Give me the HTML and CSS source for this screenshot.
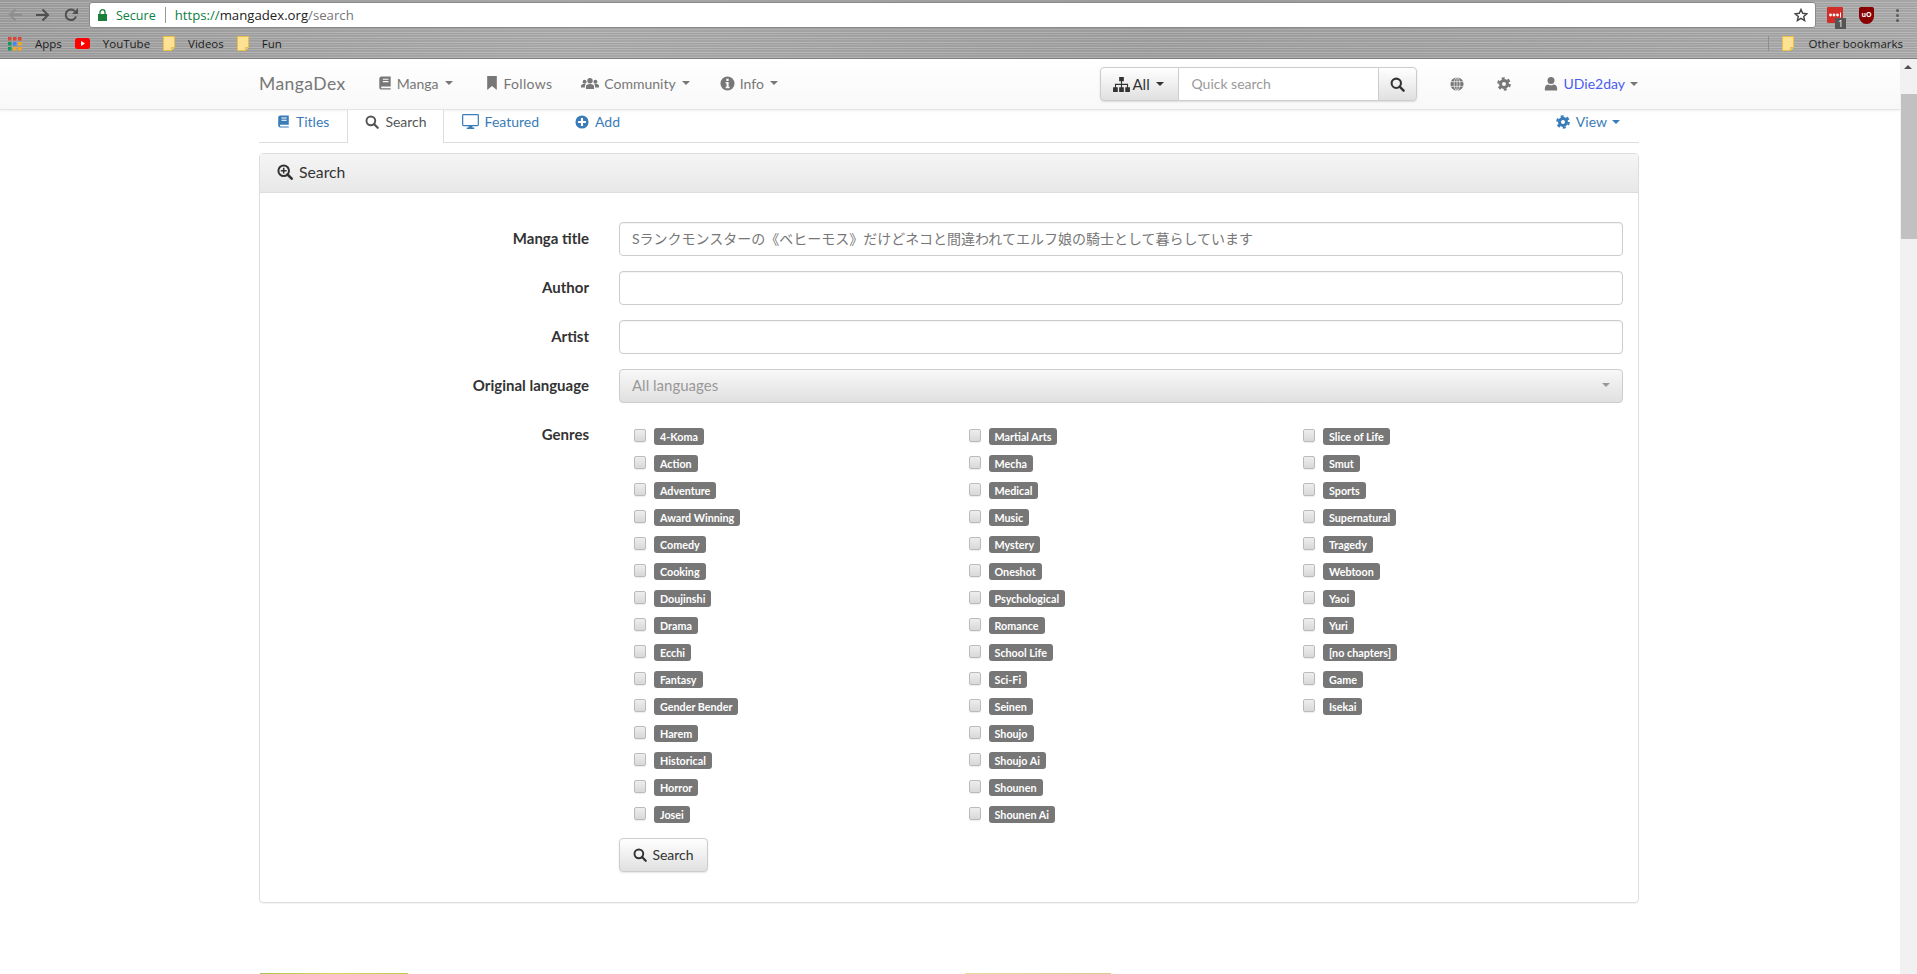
FILE: index.html
```html
<!DOCTYPE html>
<html>
<head>
  <title>Search - MangaDex</title>
  <link rel="stylesheet" href="styles.css">
</head>
<body>
  <svg class="sprite" width="0" height="0">
    <symbol id="i-book" viewBox="0 0 16 16"><path fill-rule="evenodd" d="M4 .5h10.500v11.500H4.500a1 1 0 0 0 0 2h10v1.500H4A2.500 2.500 0 0 1 1.500 13V3A2.500 2.500 0 0 1 4 .5zM5.500 3.200v1.200h6.500V3.200zM5.500 5.800V7h6.500V5.800z"/></symbol>
    <symbol id="i-bookmark" viewBox="0 0 16 16"><path d="M2.500 0h11v16L8 11.500 2.500 16z"/></symbol>
    <symbol id="i-users" viewBox="0 0 20 16"><circle cx="10" cy="5" r="3"/><circle cx="4" cy="6" r="2.200"/><circle cx="16" cy="6" r="2.200"/><path d="M5.500 14v-2.500C5.500 9.500 7 8.500 10 8.500s4.500 1 4.500 3V14zM0 12.500v-2C0 9 1.500 8.500 4 8.500c.5 0 1 0 1.300.2-.8.700-1 1.700-1 3.800zM20 12.500v-2C20 9 18.500 8.500 16 8.500c-.5 0-1 0-1.300.2.800.700 1 1.700 1 3.800z"/></symbol>
    <symbol id="i-info" viewBox="0 0 16 16"><path fill-rule="evenodd" d="M8 .5a7.500 7.500 0 1 0 0 15 7.500 7.500 0 0 0 0-15zM6.800 3h2.400v2.300H6.800zM6 6.500h3.200v5h1v1.500H6v-1.500h1v-3.500H6z"/></symbol>
    <symbol id="i-sitemap" viewBox="0 0 18 16"><path d="M6.500 0h5v4.500h-5zM0 11h5v5H0zM6.500 11h5v5h-5zM13 11h5v5h-5zM8.400 4.500h1.200v2.700H16v3.800h-1.200V8.400H9.600V11H8.400V8.400H3.200V11H2V7.200h6.400z"/></symbol>
    <symbol id="i-search" viewBox="0 0 16 16"><circle cx="6.700" cy="6.700" r="5" fill="none" stroke="currentColor" stroke-width="2.200"/><path d="M10.300 10.300l4.200 4.200" stroke="currentColor" stroke-width="2.600" stroke-linecap="round"/></symbol>
    <symbol id="i-search-plus" viewBox="0 0 16 16"><circle cx="6.700" cy="6.700" r="5.300" fill="none" stroke="currentColor" stroke-width="2"/><path d="M10.500 10.500l4.200 4.200" stroke="currentColor" stroke-width="2.600" stroke-linecap="round"/><path d="M6.700 3.800v5.800M3.800 6.700h5.800" stroke="currentColor" stroke-width="1.500"/></symbol>
    <symbol id="i-cog" viewBox="0 0 16 16"><circle cx="8" cy="8" r="4" fill="none" stroke="currentColor" stroke-width="3.400"/><circle cx="8" cy="8" r="6.500" fill="none" stroke="currentColor" stroke-width="2.600" stroke-dasharray="3.400 3.400"/></symbol>
    <symbol id="i-globe" viewBox="0 0 16 16"><circle cx="8" cy="8" r="7.500"/><g fill="none" stroke="#f4f4f4" stroke-width=".8"><ellipse cx="8" cy="8" rx="3.300" ry="7.500"/><path d="M1 5.300h14M1 10.700h14M8 .5v15"/></g></symbol>
    <symbol id="i-user" viewBox="0 0 16 16"><circle cx="8" cy="4.500" r="4"/><path d="M1 16v-2.500C1 10.500 3 9 5 9c1 .7 2 1 3 1s2-.3 3-1c2 0 4 1.500 4 4.500V16z"/></symbol>
    <symbol id="i-desktop" viewBox="0 0 18 16"><path fill-rule="evenodd" d="M1.500 0h15A1.500 1.500 0 0 1 18 1.500v10a1.500 1.500 0 0 1-1.500 1.500H11v1.500h2V16H5v-1.500h2V13H1.500A1.500 1.500 0 0 1 0 11.500v-10A1.500 1.500 0 0 1 1.500 0zM1.300 1.300v10.400h15.400V1.300z"/></symbol>
    <symbol id="i-plus" viewBox="0 0 16 16"><path fill-rule="evenodd" d="M8 .5a7.500 7.500 0 1 0 0 15 7.500 7.500 0 0 0 0-15zM6.800 3.500h2.400v3.300h3.300v2.400H9.200v3.300H6.800V9.200H3.500V6.800h3.300z"/></symbol>
    <symbol id="i-folder" viewBox="0 0 12 15"><path d="M.5.500h11v11l-3 3H.5z" fill="#fde293" stroke="#e8bf4a"/><path d="M8.500 14.500v-3h3" fill="#f0cf6a" stroke="#e8bf4a"/></symbol>
  </svg>

  <div class="chrome">
    <div class="toolbar">
      <div class="toolbar-nav">
        <svg class="nav-arrow faded" width="14" height="14" viewBox="0 0 14 14"><path d="M14 7H2M7.500 1.500L2 7l5.500 5.500" fill="none" stroke="currentColor" stroke-width="2"/></svg>
        <svg class="nav-arrow" width="14" height="14" viewBox="0 0 14 14"><path d="M0 7h12M6.500 1.500L12 7l-5.500 5.500" fill="none" stroke="currentColor" stroke-width="2"/></svg>
        <svg class="nav-arrow" width="14" height="14" viewBox="0 0 14 14"><path d="M12 8.500A5.300 5.300 0 1 1 10.700 3" fill="none" stroke="currentColor" stroke-width="2"/><path d="M14 0v6H8z" fill="currentColor"/></svg>
      </div>
      <div class="omnibox">
        <svg class="lock" width="9" height="12" viewBox="0 0 9 12"><path d="M2 5V3.200a2.500 2.500 0 0 1 5 0V5" fill="none" stroke="#188038" stroke-width="1.300"/><path d="M0 5h9v7H0z" fill="#188038"/></svg>
        <span class="secure">Secure</span>
        <span class="omni-sep"></span>
        <span class="url"><span class="url-scheme">https://</span><span class="url-host">mangadex.org</span>/search</span>
        <svg class="star" width="14" height="14" viewBox="0 0 24 24"><path d="M12 2.500l2.900 6.600 7.100.7-5.400 4.700 1.600 7-6.200-3.700-6.200 3.700 1.600-7L2 9.800l7.100-.7z" fill="none" stroke="#444" stroke-width="2.400"/></svg>
      </div>
      <div class="extensions">
        <div class="ext-lastpass">
          <svg width="16" height="16" viewBox="0 0 16 16"><circle cx="3.500" cy="8" r="1.400" fill="#fff"/><circle cx="7" cy="8" r="1.400" fill="#fff"/><circle cx="10.500" cy="8" r="1.400" fill="#fff"/><path d="M13.500 5.500v5" stroke="#fff"/></svg>
          <span class="ext-badge">1</span>
        </div>
        <div class="ext-ublock">uO</div>
        <div class="chrome-menu"><i></i><i></i><i></i></div>
      </div>
    </div>
    <div class="bookmarks">
      <div class="bm">
        <svg width="14" height="14" viewBox="0 0 14 14">
          <path fill="#db4437" d="M0 0h3.500v3.500H0z"/><path fill="#db4437" d="M5 0h3.500v3.500H5z"/><path fill="#db4437" d="M10 0h3.500v3.500H10z"/>
          <path fill="#0f9d58" d="M0 5h3.500v3.500H0z"/><path fill="#4285f4" d="M5 5h3.500v3.500H5z"/><path fill="#f4a81c" d="M10 5h3.500v3.500H10z"/>
          <path fill="#0f9d58" d="M0 10h3.500v3.500H0z"/><path fill="#f4a81c" d="M5 10h3.500v3.500H5z"/><path fill="#f4a81c" d="M10 10h3.500v3.500H10z"/>
        </svg>
        Apps
      </div>
      <div class="bm">
        <svg width="15" height="11" viewBox="0 0 15 11"><rect width="15" height="11" rx="2.500" fill="#f00"/><path d="M6 3l4 2.500L6 8z" fill="#fff"/></svg>
        YouTube
      </div>
      <div class="bm"><svg class="folder" width="12" height="15"><use href="#i-folder"/></svg>Videos</div>
      <div class="bm"><svg class="folder" width="12" height="15"><use href="#i-folder"/></svg>Fun</div>
      <div class="bm bm-other"><svg class="folder" width="12" height="15"><use href="#i-folder"/></svg>Other bookmarks</div>
    </div>
  </div>

  <div class="viewport">
    <div class="page">
      <nav class="navbar">
        <span class="brand">MangaDex</span>
        <a class="nav-item"><svg class="ico" width="14" height="16"><use href="#i-book"/></svg>Manga<span class="caret"></span></a>
        <a class="nav-item"><svg class="ico" width="14" height="16"><use href="#i-bookmark"/></svg>Follows</a>
        <a class="nav-item"><svg class="ico" width="18" height="15"><use href="#i-users"/></svg>Community<span class="caret"></span></a>
        <a class="nav-item"><svg class="ico" width="15" height="15"><use href="#i-info"/></svg>Info<span class="caret"></span></a>

        <div class="quick-search">
          <button class="qs-type"><svg class="ico" width="17" height="15"><use href="#i-sitemap"/></svg>All<span class="caret dark"></span></button>
          <input class="qs-input" type="text" placeholder="Quick search">
          <button class="qs-go"><svg width="15" height="15"><use href="#i-search"/></svg></button>
        </div>
        <a class="nav-icon"><svg width="14" height="14"><use href="#i-globe"/></svg></a>
        <a class="nav-icon"><svg width="14" height="14"><use href="#i-cog"/></svg></a>
        <a class="nav-user"><svg width="14" height="15"><use href="#i-user"/></svg><span class="user-name">UDie2day</span><span class="caret"></span></a>
      </nav>

      <main class="content">
        <ul class="tabs">
          <li class="tab"><svg width="13" height="15"><use href="#i-book"/></svg>Titles</li>
          <li class="tab active"><svg width="14" height="14"><use href="#i-search"/></svg>Search</li>
          <li class="tab"><svg width="17" height="15"><use href="#i-desktop"/></svg>Featured</li>
          <li class="tab"><svg width="14" height="14"><use href="#i-plus"/></svg>Add</li>
          <li class="tab tab-view"><svg width="14" height="14"><use href="#i-cog"/></svg>View<span class="caret"></span></li>
        </ul>

        <section class="card">
          <div class="card-header"><svg width="16" height="16"><use href="#i-search-plus"/></svg>Search</div>
          <form class="card-body">
            <div class="form-row">
              <label class="form-label">Manga title</label>
              <input class="form-input" type="text" value="Sランクモンスターの《ベヒーモス》だけどネコと間違われてエルフ娘の騎士として暮らしています">
            </div>
            <div class="form-row">
              <label class="form-label">Author</label>
              <input class="form-input" type="text">
            </div>
            <div class="form-row">
              <label class="form-label">Artist</label>
              <input class="form-input" type="text">
            </div>
            <div class="form-row">
              <label class="form-label">Original language</label>
              <div class="form-select">All languages<span class="caret"></span></div>
            </div>
            <div class="form-row genres-row">
              <label class="form-label">Genres</label>
              <div class="genres">
                <label class="genre"><input type="checkbox"><span class="badge">4-Koma</span></label>
                <label class="genre"><input type="checkbox"><span class="badge">Action</span></label>
                <label class="genre"><input type="checkbox"><span class="badge">Adventure</span></label>
                <label class="genre"><input type="checkbox"><span class="badge">Award Winning</span></label>
                <label class="genre"><input type="checkbox"><span class="badge">Comedy</span></label>
                <label class="genre"><input type="checkbox"><span class="badge">Cooking</span></label>
                <label class="genre"><input type="checkbox"><span class="badge">Doujinshi</span></label>
                <label class="genre"><input type="checkbox"><span class="badge">Drama</span></label>
                <label class="genre"><input type="checkbox"><span class="badge">Ecchi</span></label>
                <label class="genre"><input type="checkbox"><span class="badge">Fantasy</span></label>
                <label class="genre"><input type="checkbox"><span class="badge">Gender Bender</span></label>
                <label class="genre"><input type="checkbox"><span class="badge">Harem</span></label>
                <label class="genre"><input type="checkbox"><span class="badge">Historical</span></label>
                <label class="genre"><input type="checkbox"><span class="badge">Horror</span></label>
                <label class="genre"><input type="checkbox"><span class="badge">Josei</span></label>
                <label class="genre"><input type="checkbox"><span class="badge">Martial Arts</span></label>
                <label class="genre"><input type="checkbox"><span class="badge">Mecha</span></label>
                <label class="genre"><input type="checkbox"><span class="badge">Medical</span></label>
                <label class="genre"><input type="checkbox"><span class="badge">Music</span></label>
                <label class="genre"><input type="checkbox"><span class="badge">Mystery</span></label>
                <label class="genre"><input type="checkbox"><span class="badge">Oneshot</span></label>
                <label class="genre"><input type="checkbox"><span class="badge">Psychological</span></label>
                <label class="genre"><input type="checkbox"><span class="badge">Romance</span></label>
                <label class="genre"><input type="checkbox"><span class="badge">School Life</span></label>
                <label class="genre"><input type="checkbox"><span class="badge">Sci-Fi</span></label>
                <label class="genre"><input type="checkbox"><span class="badge">Seinen</span></label>
                <label class="genre"><input type="checkbox"><span class="badge">Shoujo</span></label>
                <label class="genre"><input type="checkbox"><span class="badge">Shoujo Ai</span></label>
                <label class="genre"><input type="checkbox"><span class="badge">Shounen</span></label>
                <label class="genre"><input type="checkbox"><span class="badge">Shounen Ai</span></label>
                <label class="genre"><input type="checkbox"><span class="badge">Slice of Life</span></label>
                <label class="genre"><input type="checkbox"><span class="badge">Smut</span></label>
                <label class="genre"><input type="checkbox"><span class="badge">Sports</span></label>
                <label class="genre"><input type="checkbox"><span class="badge">Supernatural</span></label>
                <label class="genre"><input type="checkbox"><span class="badge">Tragedy</span></label>
                <label class="genre"><input type="checkbox"><span class="badge">Webtoon</span></label>
                <label class="genre"><input type="checkbox"><span class="badge">Yaoi</span></label>
                <label class="genre"><input type="checkbox"><span class="badge">Yuri</span></label>
                <label class="genre"><input type="checkbox"><span class="badge">[no chapters]</span></label>
                <label class="genre"><input type="checkbox"><span class="badge">Game</span></label>
                <label class="genre"><input type="checkbox"><span class="badge">Isekai</span></label>
              </div>
            </div>
            <div class="form-row submit-row">
              <button class="search-button" type="button"><svg width="14" height="14"><use href="#i-search"/></svg>Search</button>
            </div>
          </form>
        </section>

        <div class="thumbs">
          <div class="thumb thumb-green"></div>
          <div class="thumb thumb-cream"></div>
        </div>
      </main>
    </div>

    <div class="scrollbar">
      <div class="scroll-up"></div>
      <div class="scroll-thumb"></div>
    </div>
  </div>
</body>
</html>
```

FILE: styles.css
```css
* {
  box-sizing: border-box;
}

html, body {
  margin: 0;
  height: 974px;
  overflow: hidden;
}

body {
  display: flex;
  flex-direction: column;
  background-color: #fff;
  color: #333;
  font-family: "Lato", "Noto Sans CJK JP", sans-serif;
  font-size: 14px;
}

.sprite {
  position: absolute;
}

svg {
  fill: currentColor;
  flex-shrink: 0;
}

/* browser chrome */
.chrome {
  height: 59px;
  flex-shrink: 0;
  border-bottom: 1px solid #7c7c7c;
  background-color: #aaa;
  background-image:
    repeating-linear-gradient(0deg, rgba(255,255,255,.14) 0 1px, rgba(0,0,0,.05) 1px 3px, rgba(255,255,255,.05) 3px 4px, rgba(0,0,0,.08) 4px 5px),
    linear-gradient(90deg, #a2a2a2, #b0b0b0 30%, #a4a4a4 60%, #aeaeae);
  font-family: "Open Sans", sans-serif;
}

.toolbar {
  height: 29px;
  display: flex;
  align-items: center;
  padding-top: 1px;
}

.toolbar-nav {
  width: 89px;
  display: flex;
  gap: 14px;
  padding-left: 8px;
}

.nav-arrow {
  color: #505050;
}

.nav-arrow.faded {
  color: #8e8e8e;
}

.omnibox {
  width: 1727px;
  height: 26px;
  display: flex;
  align-items: center;
  padding: 0 7px 0 8px;
  background-color: #fff;
  border: 1px solid #8a8a8a;
  border-radius: 3px;
  font-size: 13.2px;
}

.secure {
  margin-left: 9px;
  font-size: 12.5px;
  color: #0b8043;
}

.omni-sep {
  width: 1px;
  height: 16px;
  margin: 0 9px 0 9px;
  background-color: #999;
}

.url {
  color: #767676;
}

.url-scheme {
  color: #0b8043;
}

.url-host {
  color: #222;
}

.star {
  margin-left: auto;
}

.extensions {
  flex: 1;
  display: flex;
  align-items: center;
}

.ext-lastpass {
  position: relative;
  width: 16px;
  height: 16px;
  margin: 0 0 0 11px;
  background-color: #d32d27;
  border-radius: 1px;
  color: #fff;
}

.ext-badge {
  position: absolute;
  left: 8px;
  top: 11px;
  width: 11px;
  height: 11px;
  background-color: #555;
  font-size: 9px;
  line-height: 11px;
  text-align: center;
}

.ext-ublock {
  width: 15px;
  height: 17px;
  margin-left: 16px;
  background-color: #800;
  border-radius: 2px 2px 8px 8px;
  color: #fff;
  font-size: 7px;
  font-weight: 700;
  line-height: 15px;
  text-align: center;
}

.chrome-menu {
  display: flex;
  flex-direction: column;
  gap: 2px;
  margin-left: 22px;
}

.chrome-menu i {
  width: 3px;
  height: 3px;
  border-radius: 50%;
  background-color: #5a5a5a;
}

.bookmarks {
  height: 29px;
  display: flex;
  align-items: center;
  gap: 13px;
  padding: 0 14px 0 8px;
  font-size: 11.5px;
  color: #1c1c1c;
}

.bm {
  display: flex;
  align-items: center;
  gap: 13px;
}

.bm-other {
  margin-left: auto;
  padding-left: 13px;
  border-left: 1px solid #8d8d8d;
  gap: 15px;
}

/* page */
.viewport {
  flex: 1;
  display: flex;
  min-height: 0;
}

.page {
  flex: 1;
  min-width: 0;
  overflow: hidden;
}

.navbar {
  height: 51px;
  display: flex;
  align-items: center;
  padding: 0 262px 0 259px;
  background: linear-gradient(#fff, #f8f8f8);
  border-bottom: 1px solid #e3e3e3;
  box-shadow: 0 1px 3px rgba(0,0,0,.06);
  color: #777;
}

.brand {
  margin-right: 32px;
  padding-bottom: 2px;
  font-size: 17.5px;
  letter-spacing: .45px;
}

.nav-item {
  display: flex;
  align-items: center;
  margin-right: 32px;
  padding-bottom: 2px;
}

.nav-item:nth-of-type(2) {
  margin-right: 29px;
  letter-spacing: .3px;
}

.nav-item:nth-of-type(3) {
  margin-right: 30px;
}

.nav-item .ico {
  margin-right: 5px;
}

.caret {
  display: inline-block;
  width: 0;
  height: 0;
  margin-left: 6px;
  border-top: 4px solid currentColor;
  border-left: 4px solid transparent;
  border-right: 4px solid transparent;
}

.caret.dark {
  color: #333;
}

.quick-search {
  display: flex;
  height: 34px;
  margin-left: auto;
  border-radius: 4px;
  box-shadow: 0 1px 2px rgba(0,0,0,.12);
}

.qs-type, .qs-go {
  display: flex;
  align-items: center;
  border: 1px solid #ccc;
  background: linear-gradient(#fff, #e0e0e0);
  color: #333;
  font: inherit;
}

.qs-type {
  width: 79px;
  padding: 0 0 0 12px;
  border-radius: 4px 0 0 4px;
  font-size: 15px;
}

.qs-type .ico {
  margin-right: 2px;
}

.qs-input {
  width: 199px;
  padding: 0 12px 2px;
  border: 1px solid #ccc;
  border-width: 1px 0;
  font: inherit;
  outline: none;
}

.qs-input::placeholder {
  color: #999;
}

.qs-go {
  width: 39px;
  justify-content: center;
  border-radius: 0 4px 4px 0;
}

.nav-icon {
  display: flex;
  margin-left: 33px;
}

.nav-user {
  display: flex;
  align-items: center;
  margin-left: 33px;
  padding-bottom: 1px;
}

.user-name {
  margin-left: 5px;
  color: #4a5cf0;
}

.nav-user .caret {
  margin-left: 5px;
}

.content {
  width: 1380px;
  margin-left: 259px;
}

.tabs {
  height: 33px;
  display: flex;
  margin: 0;
  padding: 0;
  list-style: none;
  border-bottom: 1px solid #ddd;
  color: #3a7cb8;
}

.tab {
  display: flex;
  align-items: center;
  gap: 6px;
  padding: 0 18px 9px;
}

.tab.active {
  height: 33px;
  padding: 0 16px 10px 17px;
  border: 1px solid #ddd;
  border-width: 0 1px;
  background-color: #fff;
  color: #555;
}

.tab-view {
  margin-left: auto;
  padding-right: 19px;
}

.tab-view .caret {
  margin-left: -1px;
}

.card {
  margin-top: 10px;
  height: 750px;
  border: 1px solid #ddd;
  border-radius: 4px;
  box-shadow: 0 1px 1px rgba(0,0,0,.05);
}

.card-header {
  height: 39px;
  display: flex;
  align-items: center;
  gap: 6px;
  padding: 0 0 3px 17px;
  background: linear-gradient(#f5f5f5, #e8e8e8);
  border-bottom: 1px solid #ddd;
  font-size: 15.75px;
}

.card-body {
  padding: 29px 15px 0 0;
}

.form-row {
  display: flex;
  gap: 30px;
  min-height: 34px;
  margin-bottom: 15px;
}

.form-label {
  width: 329px;
  line-height: 33px;
  text-align: right;
  font-size: 15px;
  font-weight: 700;
}

.form-input, .form-select {
  flex: 1;
  height: 34px;
  padding: 0 12px 2px;
  border: 1px solid #ccc;
  border-radius: 4px;
  box-shadow: inset 0 1px 1px rgba(0,0,0,.05);
  color: #777;
  font: inherit;
  font-size: 14px;
  outline: none;
}

.form-select {
  display: flex;
  align-items: center;
  justify-content: space-between;
  background: linear-gradient(#f8f8f8, #e0e0e0);
  color: #999;
  font-size: 15px;
  box-shadow: none;
}

.form-select .caret {
  margin-right: 0;
}

.genres-row .form-label {
  line-height: 20px;
  margin-top: 6px;
}

.genres-row {
  margin-bottom: 0;
}

.genres {
  flex: 1;
  display: grid;
  grid-auto-flow: column;
  grid-template-rows: repeat(15, 22px);
  grid-template-columns: repeat(3, 334.5px);
  padding-top: 10px;
  row-gap: 5px;
}

.genre {
  display: flex;
  align-items: flex-start;
  gap: 8px;
  padding-left: 15px;
}

.genre input {
  appearance: none;
  width: 12px;
  height: 13px;
  margin: 1px 0 0;
  border: 1px solid #bbb;
  border-radius: 2px;
  background: linear-gradient(#eee, #d8d8d8);
  box-shadow: 0 1px 1px rgba(0,0,0,.08);
}

.badge {
  height: 17px;
  padding: 0 6px;
  background-color: #777;
  border-radius: 3px;
  color: #fff;
  font-size: 10.75px;
  font-weight: 700;
  line-height: 17px;
  white-space: nowrap;
}

.submit-row {
  margin: 10px 0 0 359px;
}

.search-button {
  width: 89px;
  height: 34px;
  display: flex;
  align-items: center;
  justify-content: center;
  gap: 5px;
  padding-bottom: 2px;
  border: 1px solid #ccc;
  border-radius: 4px;
  background: linear-gradient(#fff, #e0e0e0);
  box-shadow: 0 1px 2px rgba(0,0,0,.1);
  color: #333;
  font: inherit;
}

.thumbs {
  display: flex;
  margin-top: 70px;
}

.thumb {
  height: 200px;
}

.thumb-green {
  width: 148px;
  margin-left: 1px;
  background: linear-gradient(90deg, #a9c24a, #d6d95e 50%, #bcc94f);
}

.thumb-cream {
  width: 146px;
  margin-left: 557px;
  background: linear-gradient(90deg, #e8dc9c, #d8c98a);
}

/* page scrollbar */
.scrollbar {
  width: 17px;
  background-color: #f1f1f1;
  flex-shrink: 0;
}

.scroll-up {
  width: 0;
  height: 0;
  margin: 6px 0 25px 4px;
  border-bottom: 4px solid #505050;
  border-left: 4px solid transparent;
  border-right: 4px solid transparent;
}

.scroll-thumb {
  height: 145px;
  margin-left: 1px;
  background-color: #c1c1c1;
}
```
